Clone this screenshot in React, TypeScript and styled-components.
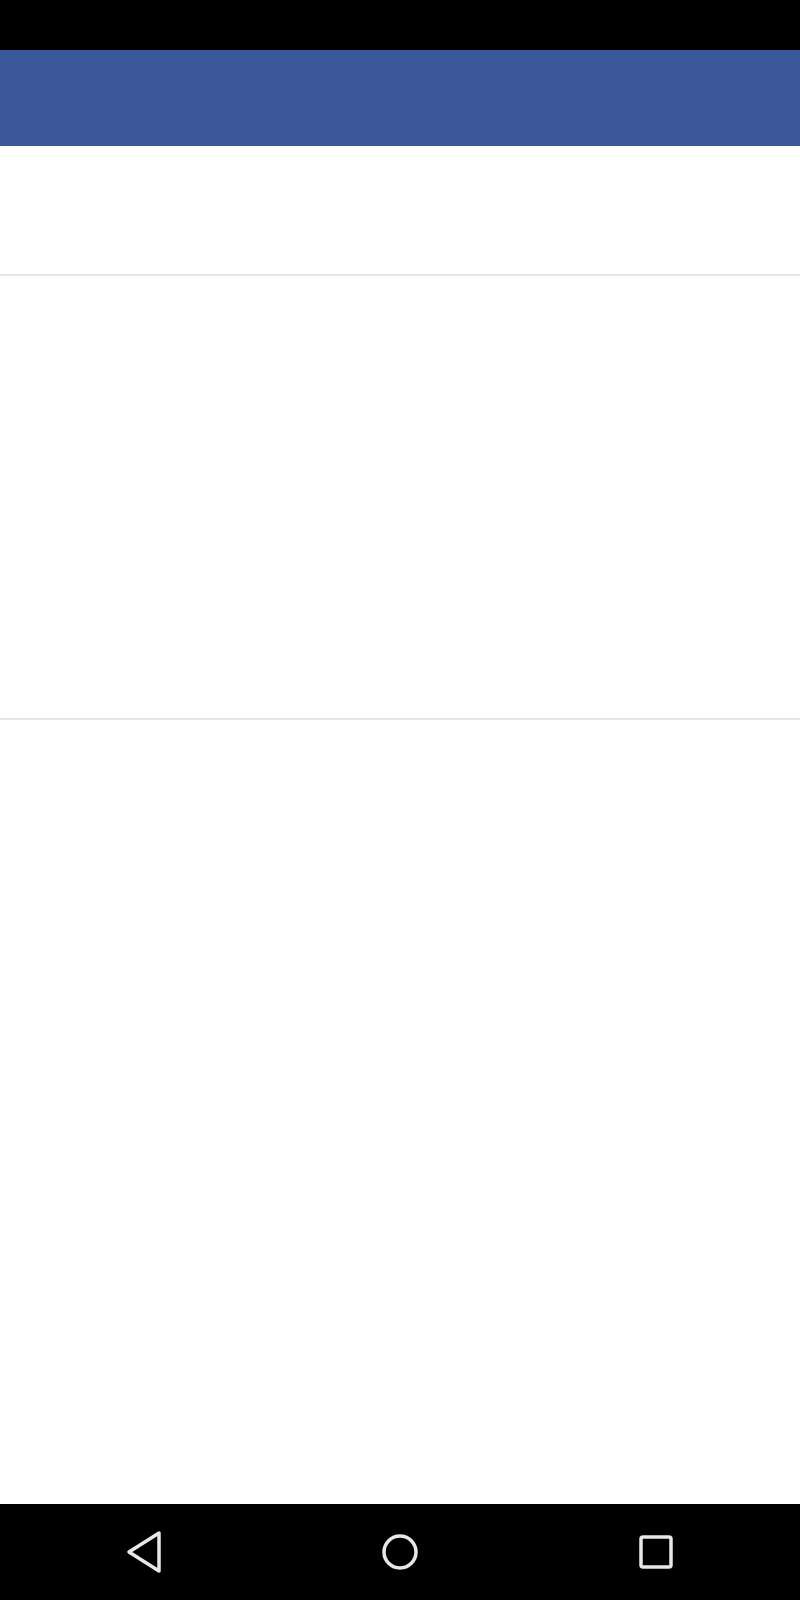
import React from 'react'
import styled, { createGlobalStyle } from 'styled-components';

const Global = createGlobalStyle`
    html, body {
        margin:0;
        padding:0;
        background:#fff;
        font-family:Roboto, "Liberation Sans", sans-serif;
    }
`;

const Screen = styled.div`
    display:flex;
    flex-direction:column;
    width:800px;
    height:1600px;
    background:#fff;
`;

const StatusBar = styled.div`
    height:50px;
    background:#000;
    flex-shrink:0;
`;

const Header = styled.header`
    height:96px;
    background:#3b5998;
    flex-shrink:0;
`;

const Section = styled.section<{ h: number }>`
    height:${p => p.h}px;
    border-bottom:2px solid #e6e6e6;
    flex-shrink:0;
`;

const Filler = styled.div`
    flex:1;
`;

const NavBar = styled.nav`
    height:96px;
    background:#000;
    flex-shrink:0;
    display:grid;
    grid-template-columns:288px 224px 288px;
    align-items:center;
    justify-items:center;
`;

const NavIcon = styled.svg`
    display:block;
    fill:none;
    stroke:#e8e8e8;
    stroke-width:3.5;
    stroke-linejoin:round;
    stroke-linecap:round;
`;

const App = () => {
  return (
    <Screen>
        <Global />
        <StatusBar />
        <Header />
        <Section h={128} />
        <Section h={442} />
        <Filler />
        <NavBar>
            <NavIcon width="40" height="44" viewBox="0 0 40 44">
                <path d="M35 3 L35 41 L5 22 Z" />
            </NavIcon>
            <NavIcon width="40" height="40" viewBox="0 0 40 40">
                <circle cx="20" cy="20" r="16" />
            </NavIcon>
            <NavIcon width="40" height="40" viewBox="0 0 40 40">
                <rect x="5" y="5" width="30" height="30" rx="2" />
            </NavIcon>
        </NavBar>
    </Screen>
  )
}

export default App
